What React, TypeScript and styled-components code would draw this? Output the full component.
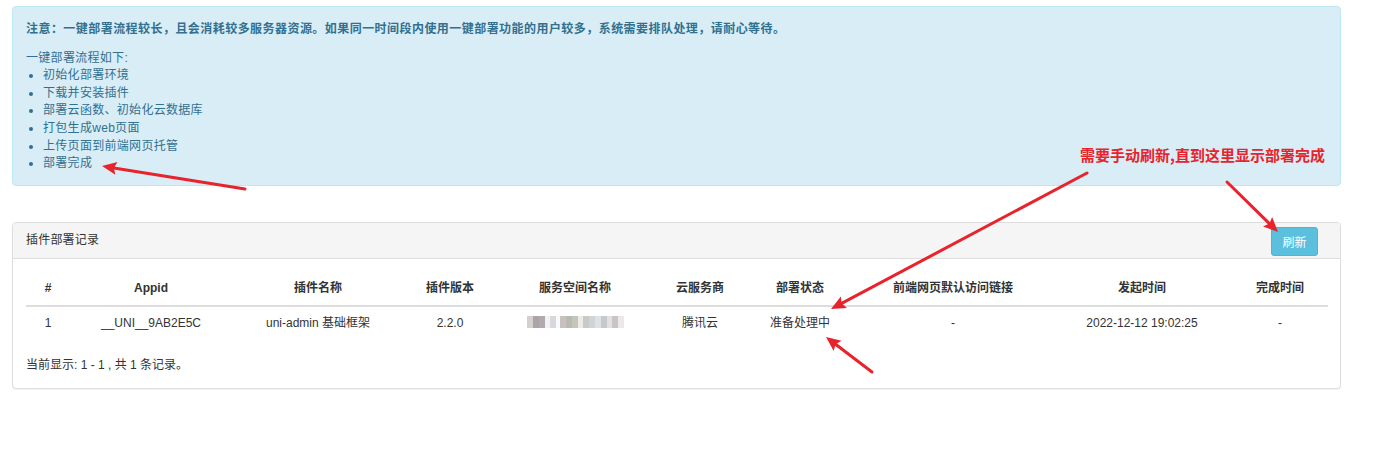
import React from "react";
import styled, { createGlobalStyle } from "styled-components";

const GlobalStyle = createGlobalStyle`
  html, body {
    margin: 0;
    padding: 0;
    background: #fff;
  }
  body {
    font-family: "Liberation Sans", Arial, "Noto Sans CJK SC", sans-serif;
    font-size: 12px;
    line-height: 17.6px;
    color: #333;
  }
`;

const Page = styled.div`
  position: relative;
  width: 1390px;
  height: 476px;
  box-sizing: border-box;
  padding: 6px 49px 0 12px;
`;

const Alert = styled.div`
  background: #d9edf7;
  border: 1px solid #bce8f1;
  border-radius: 4px;
  color: #31708f;
  padding: 14px 13px 14px 13px;
  height: 180px;
  box-sizing: border-box;
`;

const Note = styled.p`
  margin: 0 0 11px;
  font-weight: bold;
  letter-spacing: 0.45px;
`;

const Intro = styled.div`
  letter-spacing: 0.3px;
`;

const Steps = styled.ul`
  margin: 0;
  padding-left: 17px;
  letter-spacing: 0.3px;
  li {
    height: 17.6px;
  }
`;

const Panel = styled.div`
  margin-top: 36px;
  border: 1px solid #ddd;
  border-radius: 4px;
  background: #fff;
  box-shadow: 0 1px 1px rgba(0, 0, 0, 0.05);
`;

const PanelHeader = styled.div`
  display: flex;
  align-items: center;
  justify-content: space-between;
  height: 36px;
  box-sizing: border-box;
  padding: 0 22px 0 13px;
  background: #f5f5f5;
  border-bottom: 1px solid #ddd;
  border-radius: 3px 3px 0 0;
`;

const PanelTitle = styled.span`
  letter-spacing: 0.2px;
`;

const RefreshButton = styled.button`
  width: 47px;
  height: 29px;
  margin-top: 2px;
  background: #5bc0de;
  border: 1px solid #46b8da;
  border-radius: 3px;
  color: #fff;
  font-family: inherit;
  font-size: 12px;
  padding: 0;
`;

const PanelBody = styled.div`
  padding: 13px 13px 13px;
`;

const Table = styled.table`
  width: 1302px;
  table-layout: fixed;
  border-collapse: collapse;
  margin-bottom: 17px;
`;

const Th = styled.th`
  text-align: center;
  font-weight: bold;
  padding: 8px 0 7px;
  border-bottom: 2px solid #ddd;
  white-space: nowrap;
`;

const Td = styled.td`
  text-align: center;
  padding: 8px 0;
  white-space: nowrap;
`;

const Mosaic = styled.span`
  display: inline-flex;
  vertical-align: middle;
  height: 12px;
  margin-top: -2px;
`;

const Tile = styled.span<{ $c: string; $w: number }>`
  display: block;
  width: ${(p) => p.$w}px;
  height: 12px;
  background: ${(p) => p.$c};
`;

const Footer = styled.div``;

const Callout = styled.div`
  position: absolute;
  left: 1080px;
  top: 145px;
  color: #e8232b;
  font-weight: bold;
  font-size: 15px;
  line-height: 20px;
  font-family: "Noto Sans CJK SC", "Liberation Sans", sans-serif;
  white-space: nowrap;
`;

const Arrows = styled.svg`
  position: absolute;
  left: 0;
  top: 0;
  pointer-events: none;
`;

const columns = [
  { title: "#", w: 44 },
  { title: "Appid", w: 162 },
  { title: "插件名称", w: 172 },
  { title: "插件版本", w: 92 },
  { title: "服务空间名称", w: 158 },
  { title: "云服务商", w: 92 },
  { title: "部署状态", w: 108 },
  { title: "前端网页默认访问链接", w: 198 },
  { title: "发起时间", w: 180 },
  { title: "完成时间", w: 96 },
];

const steps = [
  "初始化部署环境",
  "下载并安装插件",
  "部署云函数、初始化云数据库",
  "打包生成web页面",
  "上传页面到前端网页托管",
  "部署完成",
];

const tiles: [string, number][] = [
  ["#d4d0cf", 6],
  ["#a9a4aa", 6],
  ["#b3a8ad", 6],
  ["#f3f2f3", 5],
  ["#d6d8de", 6],
  ["#fafafa", 4],
  ["#c9c0c0", 6],
  ["#b9bbb0", 6],
  ["#c2c7bb", 6],
  ["#efeae5", 5],
  ["#c8cbc5", 6],
  ["#cfd4d5", 6],
  ["#dfe2e5", 6],
  ["#c5c9cd", 6],
  ["#e3e0e3", 5],
  ["#c9c2c7", 6],
  ["#ebe8ea", 6],
];

const arrows = [
  { x1: 245, y1: 189, x2: 102, y2: 166 },
  { x1: 1087, y1: 173, x2: 831, y2: 309 },
  { x1: 1227, y1: 182, x2: 1278, y2: 232 },
  { x1: 872, y1: 372, x2: 826, y2: 337 },
];

function Arrow({ x1, y1, x2, y2 }: { x1: number; y1: number; x2: number; y2: number }) {
  const ang = Math.atan2(y2 - y1, x2 - x1);
  const len = 16;
  const spread = 0.42;
  const ax = x2 - len * Math.cos(ang - spread);
  const ay = y2 - len * Math.sin(ang - spread);
  const bx = x2 - len * Math.cos(ang + spread);
  const by = y2 - len * Math.sin(ang + spread);
  const mx = x2 - len * 0.75 * Math.cos(ang);
  const my = y2 - len * 0.75 * Math.sin(ang);
  return (
    <g>
      <line x1={x1} y1={y1} x2={mx} y2={my} stroke="#e8232b" strokeWidth={3} strokeLinecap="round" />
      <polygon points={`${x2},${y2} ${ax},${ay} ${mx},${my} ${bx},${by}`} fill="#e8232b" />
    </g>
  );
}

export default function App() {
  return (
    <Page>
      <GlobalStyle />
      <Alert>
        <Note>
          注意：一键部署流程较长，且会消耗较多服务器资源。如果同一时间段内使用一键部署功能的用户较多，系统需要排队处理，请耐心等待。
        </Note>
        <Intro>一键部署流程如下:</Intro>
        <Steps>
          {steps.map((s) => (
            <li key={s}>{s}</li>
          ))}
        </Steps>
      </Alert>

      <Panel>
        <PanelHeader>
          <PanelTitle>插件部署记录</PanelTitle>
          <RefreshButton>刷新</RefreshButton>
        </PanelHeader>
        <PanelBody>
          <Table>
            <colgroup>
              {columns.map((c) => (
                <col key={c.title} style={{ width: c.w }} />
              ))}
            </colgroup>
            <thead>
              <tr>
                {columns.map((c) => (
                  <Th key={c.title}>{c.title}</Th>
                ))}
              </tr>
            </thead>
            <tbody>
              <tr>
                <Td>1</Td>
                <Td>__UNI__9AB2E5C</Td>
                <Td>uni-admin 基础框架</Td>
                <Td>2.2.0</Td>
                <Td>
                  <Mosaic>
                    {tiles.map(([c, w], i) => (
                      <Tile key={i} $c={c} $w={w} />
                    ))}
                  </Mosaic>
                </Td>
                <Td>腾讯云</Td>
                <Td>准备处理中</Td>
                <Td>-</Td>
                <Td>2022-12-12 19:02:25</Td>
                <Td>-</Td>
              </tr>
            </tbody>
          </Table>
          <Footer>当前显示: 1 - 1 , 共 1 条记录。</Footer>
        </PanelBody>
      </Panel>

      <Callout>需要手动刷新,直到这里显示部署完成</Callout>
      <Arrows width={1390} height={476}>
        {arrows.map((a, i) => (
          <Arrow key={i} {...a} />
        ))}
      </Arrows>
    </Page>
  );
}
